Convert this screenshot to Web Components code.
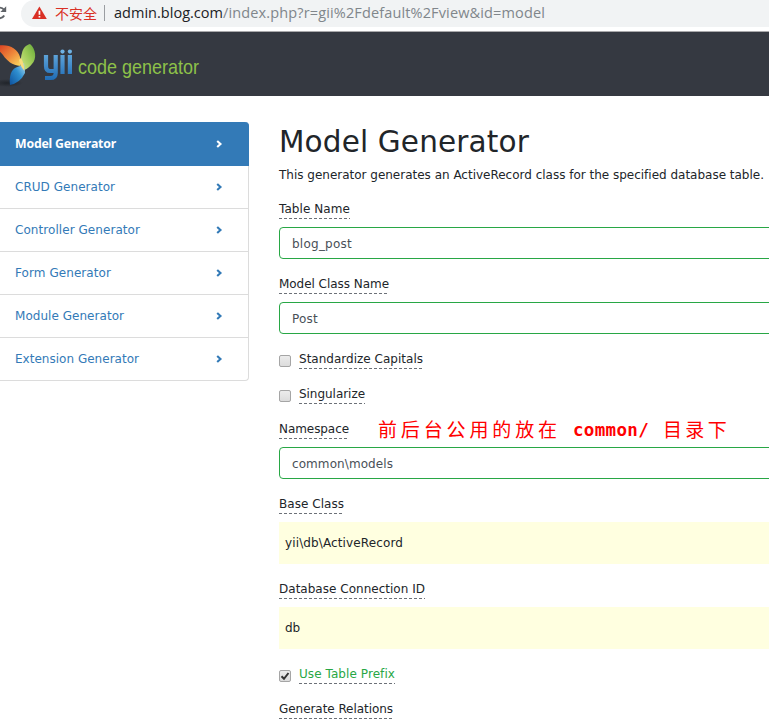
<!DOCTYPE html>
<html lang="en">
<head>
<meta charset="utf-8">
<title>Model Generator</title>
<style>
html,body{margin:0;height:726px;overflow:hidden;background:#fff}
body{font-family:"DejaVu Sans",Verdana,sans-serif;font-size:12px;color:#212529}
</style>
</head>
<body>
<gii-app></gii-app>
<script>
// Base class: renders the static template of each component in an open root.
class Base extends HTMLElement {
  constructor() { super(); this.attachShadow({ mode: 'open' }); }
  connectedCallback() {
    const t = document.createElement('template');
    t.innerHTML = this.view();
    this.shadowRoot.replaceChildren(t.content.cloneNode(true));
  }
}

// Single line of text tracked so that it fills the width given in "w".
class FitText extends Base {
  view() {
    return `<style>:host{display:inline-block;white-space:pre}span{display:inline-block}</style><span>${this.textContent.replace(/&/g, '&amp;')}</span>`;
  }
  connectedCallback() {
    super.connectedCallback();
    const s = this.shadowRoot.querySelector('span');
    const w = +this.getAttribute('w');
    this.style.width = w + 'px';
    s.style.letterSpacing = (w - s.getBoundingClientRect().width) / this.textContent.length + 'px';
  }
}
customElements.define('fit-text', FitText);

customElements.define('address-bar', class extends Base {
  view() {
    return `<style>
      :host{display:flex;height:31px;background:#fff;border-bottom:1px solid #a9a9ab;overflow:hidden;font-family:"Open Sans","Noto Sans CJK SC",sans-serif}
      .reload{width:21px;height:27px;flex:none}
      .pill{flex:1;height:27px;background:#f1f3f4;border-radius:14px 0 0 14px;display:flex;align-items:center;font-size:14.5px;line-height:26px}
      .warn{margin:-1px 0 0 11px;width:15px;height:14px;flex:none}
      .cn{margin:-2px 0 0 8px;color:#d93025;font-size:14px;font-family:"Noto Sans CJK SC",sans-serif;font-weight:400}
      i{width:1px;height:16px;background:#9a9da1;margin:-1px 9px 0 7px}
      .host,.path{margin-top:-2px}
      .host{color:#202124}.path{color:#80868b}
    </style>
    <svg class="reload" viewBox="0 0 21 27"><path d="M0 7.6A5 5 0 0 1 4 9.8M4.2 15.5A5.2 5.2 0 0 1 0 18.2" fill="none" stroke="#5f6368" stroke-width="1.9"/><path d="M6.2 6.2v5.7H.4z" fill="#5f6368"/></svg>
    <div class="pill">
      <svg class="warn" viewBox="0 0 15 14"><path d="M7.4.5 14.8 13H0z" fill="#d93025"/><path d="M6.6 4.8h1.7v4H6.6zM6.6 10h1.7v1.6H6.6z" fill="#fff"/></svg>
      <fit-text class="cn" w="42">不安全</fit-text><i></i>
      <fit-text class="host" w="109">admin.blog.com</fit-text><fit-text class="path" w="322">/index.php?r=gii%2Fdefault%2Fview&amp;id=model</fit-text>
    </div>`;
  }
});

customElements.define('gii-header', class extends Base {
  view() {
    return `<style>:host{display:block;height:64px;background:#353941}svg{display:block}</style>
    <svg width="230" height="64" viewBox="0 32 230 64">
      <defs>
        <linearGradient id="o" x1="0" y1="0" x2="1" y2="1"><stop offset="0" stop-color="#d93a20"/><stop offset=".55" stop-color="#ee8b3c"/><stop offset="1" stop-color="#fbdc62"/></linearGradient>
        <linearGradient id="g" x1="1" y1="0" x2="0" y2="1"><stop offset="0" stop-color="#64a838"/><stop offset=".5" stop-color="#9fcb58"/><stop offset="1" stop-color="#d3e588"/></linearGradient>
        <linearGradient id="b" x1="1" y1="0" x2="0" y2="1"><stop offset="0" stop-color="#b0dcef"/><stop offset=".45" stop-color="#2f8fd0"/><stop offset="1" stop-color="#0d519c"/></linearGradient>
        <linearGradient id="y" gradientUnits="userSpaceOnUse" x1="0" y1="50" x2="0" y2="80"><stop offset="0" stop-color="#6aaee0"/><stop offset="1" stop-color="#1f6cb5"/></linearGradient>
        <radialGradient id="s"><stop offset="0" stop-color="#20242a"/><stop offset="1" stop-color="#20242a" stop-opacity="0"/></radialGradient>
      </defs>
      <ellipse cx="7" cy="83" rx="16" ry="4" fill="url(#s)"/>
      <path d="M-3 46C7 43 18 48 20 57C21 60 21 63 20.5 66C12 65 7 61 3 55Q0 51-3 50Z" fill="url(#o)"/>
      <path d="M30 44C36 49 37 59 32 64Q28 69 24 70C21 65 20 59 22 53C23 48 26 45 30 44Z" fill="url(#g)"/>
      <path d="M24 63Q25 70 25 73Q20 83 10 85C9 76 11 70 16 67.5Q21 66 24 63Z" fill="url(#b)"/>
      <path d="M21 58Q24 63 24.5 71Q20 66 19 60Z" fill="#f9dc7b"/>
      <g fill="none" stroke="url(#y)" stroke-width="4.2">
        <path d="M46 55V66Q46 71 50 71H55.7M55.7 55V73Q55.7 78 50.5 78H45"/>
        <path d="M62.5 55V74M69.9 55V74"/>
      </g>
      <circle cx="62.5" cy="51.6" r="2.1" fill="#6eb2e4"/><circle cx="69.9" cy="51.6" r="2.1" fill="#6eb2e4"/>
      <text x="78" y="73.5" textLength="121" lengthAdjust="spacingAndGlyphs" font-family="Liberation Sans,Arial,sans-serif" font-size="21" fill="#8dc149">code generator</text>
    </svg>`;
  }
});

customElements.define('nav-item', class extends Base {
  view() {
    return `<style>
      :host{display:flex;align-items:center;justify-content:space-between;height:42px;padding:0 25px 0 15px;border-right:1px solid #dcdcdc;border-bottom:1px solid #dcdcdc;color:#337ab7;line-height:18px}
      :host([active]){height:43px;background:#337ab7;border-color:#337ab7;color:#fff;font:bold 12.3px/18px "Noto Sans",sans-serif;border-radius:0 4px 0 0}
      :host(:last-of-type){border-radius:0 0 4px 0}
      svg{display:block}
    </style><slot></slot><svg width="7" height="8" viewBox="0 0 7 8"><path d="M1.2.9 4.5 4 1.2 7.1" fill="none" stroke="currentColor" stroke-width="2.1"/></svg>`;
  }
});

customElements.define('field-label', class extends Base {
  view() {
    return `<style>:host{display:block;box-sizing:border-box;width:max-content;height:20px;line-height:21px}
    .line{height:19px;border-bottom:1px solid transparent;background:repeating-linear-gradient(90deg,#6c7178 0 3px,transparent 3px 5px) 0 19px/100% 1px no-repeat border-box;display:flex}</style>
    <div class="line"><slot></slot></div>`;
  }
});

customElements.define('form-field', class extends Base {
  view() {
    return `<style>
      :host{display:flex;flex-direction:column;gap:8px;width:560px}
      .box{box-sizing:border-box;height:32px;border:1px solid #28a745;border-radius:4px;padding:0 12px;line-height:33px;color:#495057}
      :host([sticky]) .box{height:42px;border:0;border-radius:0;background:#ffffe0;padding:0 6px;line-height:43px;color:#212529}
    </style><field-label><slot></slot></field-label><div class="box"><slot name="value"></slot></div>`;
  }
});

customElements.define('check-field', class extends Base {
  view() {
    return `<style>
      :host{display:flex;gap:8px;height:20px}
      b{box-sizing:border-box;width:12px;height:12px;margin-top:6px;border:1px solid #a5a5a5;border-radius:2px;background:linear-gradient(#ececec,#dcdcdc)}
      svg{display:none}:host([checked]) svg{display:block}
      :host([checked]){color:#28a745}
    </style><b><svg width="10" height="10" viewBox="0 0 10 10"><path d="M1.5 5.2 4 7.8 8.5 2" fill="none" stroke="#333" stroke-width="2"/></svg></b><field-label><slot></slot></field-label>`;
  }
});

customElements.define('gii-app', class extends Base {
  view() {
    return `<style>
      :host{display:block;width:769px;height:726px;overflow:hidden}
      main{display:grid;grid-template-columns:249px 560px;column-gap:30px;align-items:start;padding-top:26px}
      h1{margin:0;font-size:29.5px;font-weight:400;line-height:41px;height:43px}
      p{margin:0 0 25px;line-height:20px;height:9px}
      form{display:flex;flex-direction:column;gap:15px}
      .note{position:absolute;left:378px;top:418px;width:352px;height:25px;display:flex;align-items:center;color:#f00;font-family:"Noto Sans CJK SC",sans-serif;font-size:19px;line-height:25px}
      .note b{margin:0 14px 0 12px;font-family:"DejaVu Sans Mono",monospace;font-size:17.5px}
      .note .c{margin-top:-4px}
    </style>
    <address-bar></address-bar><gii-header></gii-header>
    <main>
      <nav>
        <nav-item active><fit-text w="101">Model Generator</fit-text></nav-item>
        <nav-item><fit-text w="100">CRUD Generator</fit-text></nav-item>
        <nav-item><fit-text w="125">Controller Generator</fit-text></nav-item>
        <nav-item><fit-text w="96">Form Generator</fit-text></nav-item>
        <nav-item><fit-text w="109">Module Generator</fit-text></nav-item>
        <nav-item><fit-text w="124">Extension Generator</fit-text></nav-item>
      </nav>
      <section>
        <h1><fit-text w="250">Model Generator</fit-text></h1>
        <p><fit-text w="485">This generator generates an ActiveRecord class for the specified database table.</fit-text></p>
        <form>
          <form-field><fit-text w="71">Table Name</fit-text><fit-text slot="value" w="60">blog_post</fit-text></form-field>
          <form-field><fit-text w="110">Model Class Name</fit-text><fit-text slot="value" w="26">Post</fit-text></form-field>
          <check-field><fit-text w="124">Standardize Capitals</fit-text></check-field>
          <check-field><fit-text w="66">Singularize</fit-text></check-field>
          <form-field><fit-text w="70">Namespace</fit-text><fit-text slot="value" w="101">common\\models</fit-text></form-field>
          <form-field sticky><fit-text w="65">Base Class</fit-text><fit-text slot="value" w="118">yii\\db\\ActiveRecord</fit-text></form-field>
          <form-field sticky><fit-text w="146">Database Connection ID</fit-text><fit-text slot="value" w="15">db</fit-text></form-field>
          <check-field checked><fit-text w="96">Use Table Prefix</fit-text></check-field>
          <form-field><fit-text w="114">Generate Relations</fit-text></form-field>
        </form>
      </section>
    </main>
    <div class="note"><fit-text class="c" w="183">前后台公用的放在</fit-text><b><fit-text w="76">common/</fit-text></b><fit-text class="c" w="67">目录下</fit-text></div>`;
  }
});
</script>
</body>
</html>
